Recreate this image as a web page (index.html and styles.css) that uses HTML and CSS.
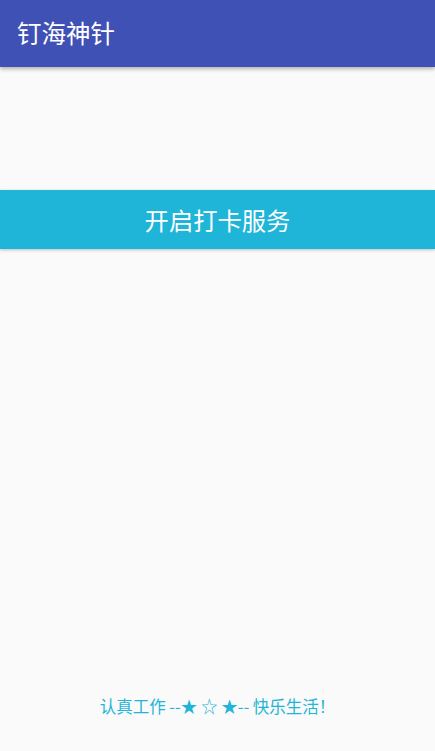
FILE: index.html
```html
<!DOCTYPE html>
<html>
<head>
<meta charset="utf-8">
<link rel="stylesheet" href="styles.css">
</head>
<body>
<div class="screen">
  <header class="appbar"><span class="title">钉海神针</span></header>
  <main class="content">
    <div class="btn">开启打卡服务</div>
  </main>
  <footer class="footer">认真工作 --★ ☆ ★-- 快乐生活！</footer>
</div>
</body>
</html>
```
FILE: styles.css
```css
html, body { margin: 0; padding: 0; }
body {
  background: #fafafa;
  font-family: "Noto Sans CJK SC", "Noto Sans", sans-serif;
}
.screen {
  width: 435px;
  height: 751px;
  display: flex;
  flex-direction: column;
  overflow: hidden;
}
.appbar {
  height: 67px;
  background: #3f51b5;
  display: flex;
  align-items: center;
  padding-left: 17px;
  box-shadow: 0 2px 4px rgba(0,0,0,0.3);
  position: relative;
  z-index: 1;
  flex: none;
}
.title {
  color: #fff;
  font-size: 24.5px;
  line-height: 1;
}
.content {
  flex: 1;
  padding-top: 123px;
}
.btn {
  height: 59px;
  background: #1eb5d8;
  color: #fff;
  font-size: 24.3px;
  display: flex;
  align-items: center;
  justify-content: center;
  box-shadow: 0 1px 3px rgba(0,0,0,0.25);
}
.footer {
  flex: none;
  height: 58px;
  color: #1eb5d8;
  font-size: 16.5px;
  text-align: center;
  line-height: 1;
  padding-top: 5px;
  padding-left: 0;
  box-sizing: border-box;
}
```
